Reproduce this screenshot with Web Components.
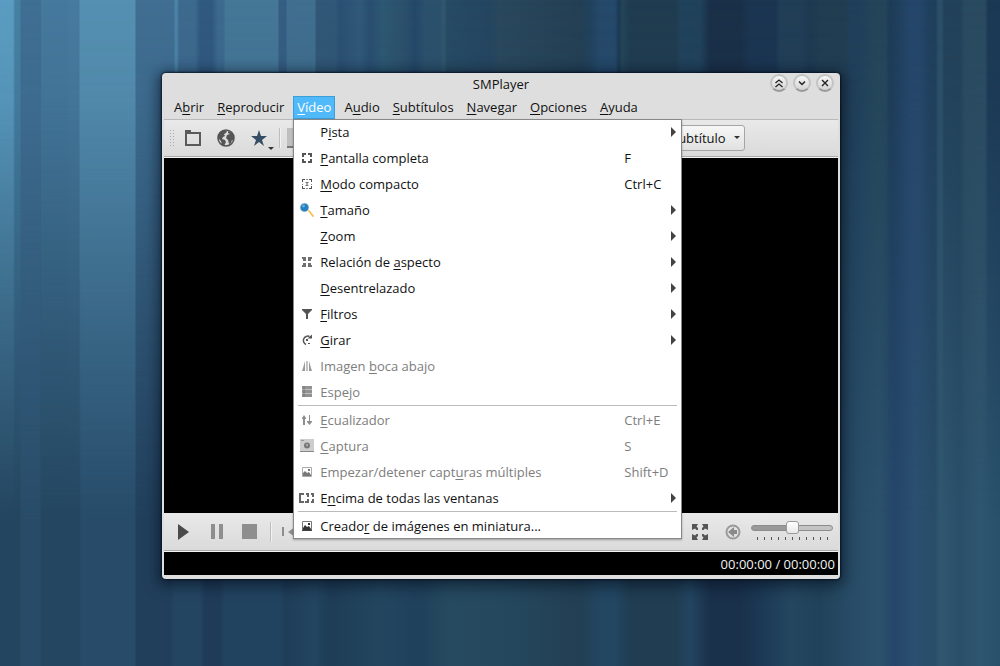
<!DOCTYPE html>
<html lang="es">
<head>
<meta charset="utf-8">
<title>SMPlayer</title>
<style>
  body { margin: 0; font: 13px/18px "Open Sans", "Noto Sans", sans-serif; color: #111; }
</style>
</head>
<body>
<sm-desktop>
  <sm-window></sm-window>
  <sm-pointer></sm-pointer>
</sm-desktop>

<script>
const define = (name, html, setup) => {
  const template = document.createElement('template');
  template.innerHTML = html;
  customElements.define(name, class extends HTMLElement {
    constructor() {
      super();
      this.attachShadow({ mode: 'open' }).append(template.content.cloneNode(true));
    }
    connectedCallback() { if (setup) setup(this, this.shadowRoot); }
  });
};

// Each entry: [size, SVG markup]
const icons = {
  folder: [18, '<path d="M1 1h6v2h10v14H1zM3 5v10h12V5z" fill="#5b5b5b" fill-rule="evenodd"/>'],
  globe: [18, '<circle cx="9" cy="9" r="8" fill="#dcdcdc" stroke="#555" stroke-width="1.6"/><path d="M2 4l4-3 4 1-1 2-2 1 1 2-2 1-1 2 3 1 1 2-2 4-2-1-1-4-3-3zM11 2l4 2 2 4v4l-2-1-1 3-2 1-1-4-2-2 1-3 3-1-2-1z" fill="#555"/>'],
  star: [18, '<path d="M9 1l2 6h6l-5 4 2 6-5-4-5 4 2-6-5-4h6z" fill="#364d66"/>'],
  cut: [20, '<path d="M0 0h20v18H0z" fill="#bfbfbf"/><path d="M0 18h20v2H0z" fill="#777"/>'],
  play: [18, '<path d="M4 1l11 8-11 8z" fill="#4a4a4a"/>'],
  pause: [18, '<path d="M4 1h4v15H4zM12 1h4v15h-4z" fill="#8e8e8e"/>'],
  stop: [18, '<path d="M2 1h15v15H2z" fill="#8e8e8e"/>'],
  prev: [18, '<path d="M1 4h2v9H1zM14 4v10L7 9z" fill="#8e8e8e"/>'],
  full: [18, '<path d="M1 1h6L5.500 3.500 7 5v2H5.500L4 5.500 1 7zM17 1h-6l1.500 2.500L11 5v2h1.500L14 5.500 17 7zM1 17h6l-1.500-2.500L7 13v-2H5.500L4 12.500 1 11zM17 17h-6l1.500-2.500L11 13v-2h1.500l1.500 1.500 3-1.500z" fill="#555"/>'],
  mute: [18, '<circle cx="9" cy="9" r="6.500" fill="none" stroke="#9a9a9a" stroke-width="2"/><path d="M4 9l6-5v3h3v4h-3v3z" fill="#8a8a8a"/>'],
  fit: [16, '<path d="M3 3h4v2H5v2H3zM9 3h4v4h-2V5H9zM3 9h2v2h2v2H3zM11 9h2v4H9v-2h2z" fill="#555"/>'],
  compact: [16, '<path d="M3 3h3v1H4v2H3zM10 3h3v3h-1V4h-2zM3 10h1v2h2v1H3zM12 10h1v3h-3v-1h2z" fill="#555"/><path d="M7 3h2v1H7zM7 12h2v1H7zM3 8h1v1H3zM12 8h1v1h-1z" fill="#888"/><path d="M6 6h4L8.500 7.500v1L10 10H6l1.500-1.500v-1z" fill="#777"/>'],
  lens: [16, '<path d="M10 9l4 5" stroke="#f4c35a" stroke-width="2" stroke-linecap="round"/><circle cx="5.500" cy="5.500" r="4.300" fill="#2580bd" stroke="#b9cdd8" stroke-width=".6"/><circle cx="4.500" cy="4" r="1.400" fill="#65b0df"/>'],
  aspect: [16, '<path d="M3 3h4v4H4V5H3zM13 3H9v4h3V5h1zM3 13h4V9H4v2H3zM13 13H9V9h3v2h1z" fill="#707070"/>'],
  funnel: [16, '<path d="M3 3h10v1L9 8v5H7V8L3 4z" fill="#555"/>'],
  rotate: [16, '<path d="M10.500 4.500A4.200 4.200 0 1 0 7 12.500" fill="none" stroke="#555" stroke-width="1.500"/><path d="M8.500 6.500H13V2.500z" fill="#555"/><path d="M7 7h2v2H7zM9 11h2v1H9z" fill="#555"/>'],
  flip: [16, '<path d="M6 3v10H3l1-3zM7 3h2v10H7zM10 3l2 7 1 3h-3z" fill="#999"/><path d="M7.500 3h1v11h-1z" fill="#eee"/>'],
  mirror: [16, '<path d="M3 2h10v11H3z" fill="#929292"/><path d="M3 5.500h10M3 9.500h10" stroke="#ccc" stroke-width=".8"/><path d="M5 2v11" stroke="#777"/>'],
  equal: [16, '<path d="M3 6l2-3 2 3H6v7H4V6zM10 3h1v7h2l-2.500 3L8 10h2z" fill="#8e8e8e"/><path d="M3 6.500h4M8 9.500h5" stroke="#8e8e8e"/>'],
  camera: [16, '<path d="M1 1h14v12H1z" fill="#cdcdcd"/><path d="M1 13h14v1H1z" fill="#888"/><circle cx="8" cy="7.500" r="3" fill="#777"/><circle cx="8" cy="7" r="1.200" fill="#a8a8a8"/><path d="M2 2h3v1H2z" fill="#999"/>'],
  photoDim: [16, '<path d="M3.500 3.500h9v9h-9z" fill="none" stroke="#aaa"/><path d="M4 12V9l2-2 2 2 2-1 2 3v1zM9 5h2v2H9z" fill="#777"/>'],
  ontop: [16, '<path d="M0 3h5v2H2v6h3v2H0zM7 3h3v4H8V5H7zM8 9h2v4H6v-2h2zM12 3h3v4h-2V5h-1zM13 9h2v4h-3v-2h1z" fill="#666"/>'],
  photo: [16, '<path d="M3.500 3.500h9v9h-9z" fill="none" stroke="#777"/><path d="M4 12V10l2-3 2 2 2-1 2 3v1zM9 5h2v2H9z" fill="#333"/><path d="M3 12h10v1H3z" fill="#444"/>'],
  shade: [10, '<path d="M1.500 5L5 2l3.500 3M1.500 9L5 6l3.500 3" fill="none" stroke="#222" stroke-width="1.300"/>'],
  down: [10, '<path d="M2 3.500l3 3 3-3" fill="none" stroke="#222" stroke-width="1.500"/>'],
  close: [10, '<path d="M2 2l6 6M8 2l-6 6" fill="none" stroke="#222" stroke-width="1.400"/>'],
  submenu: [10, '<path d="M2 0l5 5-5 5z" fill="#444"/>'],
  caret: [6, '<path d="M0 2h6L3 5z" fill="#333"/>']
};

define('sm-icon', `
  <style>:host{display:block;flex:none;line-height:0} svg{display:block}</style>`,
  (host, root) => {
    const entry = icons[host.getAttribute('name')];
    if (!entry) return;
    const [size, art] = entry;
    root.innerHTML += `<svg width="${size}" height="${size}" viewBox="0 0 ${size} ${size}" aria-hidden="true">${art}</svg>`;
  });

define('sm-desktop', `
  <style>
    :host{
      display:flex;flex-direction:column;box-sizing:border-box;min-height:100vh;
      padding:73px 16% 87px 162px;position:relative;isolation:isolate;
      background:
        linear-gradient(90deg,
          #5b9dc2 0 1.3%,#4681a4 1.5% 2%,#406f94 2.1% 4.1%,#45799d 4.1% 6.8%,#477b9f 6.9% 7.900%,
          #5590b2 8% 13.500%,#406f93 13.600% 17.400%,#4c83a8 17.500% 17.700%,#3d6a8e 17.900% 19.500%,
          #315a81 20% 21.200%,#3d6a8f 21.800% 22.400%,#457797 22.500% 27.800%,#365e83 27.900% 28.600%,
          #416f90 28.700% 31.500%,#315877 31.600% 33.500%,#2b5073 34%,#30597a 36%,#294e70 37%,
          #2e5874 38.200%,#2b506b 40.500%,#24486a 41.500%,#2b516c 42.500% 44%,#32586e 44.400%,#264b64 44.700%,
          #254560 49%,#29485d 50%,#243f54 58%,#21425d 59%,#25496a 60% 61.500%,#1c3850 61.900%,
          #24455a 62.200%,#203c50 63% 67.600%,#21425b 68% 70%,#1a3048 71% 74%,#1b3551 75% 77.500%,
          #213e57 78% 80%,#1d3951 81%,#213d51 82% 84.500%,#203f5a 85% 86%,#244559 87.500% 88.500%,
          #1d3b56 89%,#25466a 91% 92%,#203f5c 93% 93.600%,#2c4e67 93.800% 94.200%,#22415a 94.400% 96%,
          #2a4a60 96.500% 98.500%,#1b3854 98.800% 100%);
    }
    :host::before{
      content:"";position:absolute;inset:0;z-index:-1;
      background:linear-gradient(90deg,
        #24455f 0 2%,#284c68 2.100% 4%,#244660 4.100% 8%,#274b69 8.100% 13.500%,#213f5b 13.600% 17%,
        #244562 17.500% 20%,#1f3b58 20.500% 22%,#22435f 22.500% 28%,#1f3d58 28.500%,#23455f 31.500%,
        #1e3c56 33%,#23465f 38%,#20405b 42%,#264a60 45%,#25485e 50%,#223f53 58%,#234661 60% 61.500%,
        #203d52 63% 67.500%,#234560 69%,#1a314b 71% 74%,#1c3854 76%,#24465f 79%,#21425a 82%,
        #284c66 85%,#2b516c 88%,#24466a 89.500%,#2b5070 91.500%,#284d68 93.500%,#305770 94%,#2a4f69 96%,
        #2f566f 98%,#28506a 100%);
      -webkit-mask:linear-gradient(transparent 0,rgba(0,0,0,.1) 15%,rgba(0,0,0,.55) 45%,#000 78%);
      mask:linear-gradient(transparent 0,rgba(0,0,0,.1) 15%,rgba(0,0,0,.55) 45%,#000 78%);
    }
  </style><slot></slot>`);

define('sm-pointer', `
  <style>:host{display:block;position:absolute;left:498px;top:371px;pointer-events:none;filter:drop-shadow(0 1px 1px rgba(0,0,0,.5))}</style>
  <svg width="14" height="22" viewBox="0 0 14 22" aria-hidden="true"><path d="M1 1l10 11-3 1-1 4-2-1-4 2z" fill="#222"/><path d="M1 18l4-3 2 3 1-4 3-2" fill="none" stroke="#eee" stroke-width="1.200"/></svg>`);

define('sm-titlebar', `
  <style>
    :host{display:grid;grid-template-columns:1fr auto 1fr;align-items:start;height:23px}
    h1{grid-column:2;margin:0;padding-top:2px;font:inherit}
    div{display:flex;gap:5px;justify-content:flex-end;padding:1px 4px 0 0}
    button{display:grid;place-items:center;box-sizing:border-box;width:18px;height:18px;padding:0;border:2px solid #c4c4c4;border-radius:50%;
      border-bottom-color:#999;background:linear-gradient(#f6f6f6,#d4d4d4)}
  </style>
  <h1>SMPlayer</h1>
  <div>
    <button aria-label="Maximizar"><sm-icon name="shade"></sm-icon></button>
    <button aria-label="Minimizar"><sm-icon name="down"></sm-icon></button>
    <button aria-label="Cerrar"><sm-icon name="close"></sm-icon></button>
  </div>`);

define('sm-menu', `
  <style>
    :host{display:block}
    button{display:block;box-sizing:border-box;height:23px;padding:0 4px 1px;border:0;background:none;font:inherit;color:inherit;white-space:nowrap}
    :host([open]) button{background:#4fb9f9;color:#fff;box-shadow:inset 0 0 0 1px #3d9fd8}
  </style>
  <button><slot></slot></button><slot name="panel"></slot>`);

define('sm-menu-item', `
  <style>
    :host{display:block}
    button{display:grid;grid-template-columns:16px 1fr 45px 10px;align-items:center;width:100%;height:26px;
      padding:0 3px 0 6px;border:0;background:none;font:inherit;color:inherit;text-align:left;white-space:nowrap}
    .label{padding-left:5px}
    button:disabled{color:#7d7d7d}
  </style>
  <button role="menuitem"><sm-icon></sm-icon><span class="label"><slot></slot></span><span class="key"></span><span class="more"></span></button>`,
  (host, root) => {
    const icon = document.createElement('sm-icon');
    icon.setAttribute('name', host.getAttribute('icon') || '');
    root.querySelector('sm-icon').replaceWith(icon);
    root.querySelector('button').disabled = host.hasAttribute('disabled');
    root.querySelector('.key').textContent = host.getAttribute('key') || '';
    if (host.hasAttribute('submenu')) root.querySelector('.more').innerHTML = '<sm-icon name="submenu"></sm-icon>';
  });

define('sm-menu-panel', `
  <style>
    :host{display:block;position:absolute;z-index:2;top:100%;left:0;width:389px;background:#fff;color:#111;box-shadow:0 1px 2px rgba(0,0,0,.3)}
    :host::after{content:"";position:absolute;inset:0;border:1px solid #888;pointer-events:none}
    hr{margin:0 5px;border:0;height:2px;background:linear-gradient(#bbb 1px,#fff 1px)}
    u{text-decoration:underline 1px;text-underline-offset:2px}
  </style>
  <div role="menu">
    <sm-menu-item submenu>P<u>i</u>sta</sm-menu-item>
    <sm-menu-item icon="fit" key="F"><u>P</u>antalla completa</sm-menu-item>
    <sm-menu-item icon="compact" key="Ctrl+C"><u>M</u>odo compacto</sm-menu-item>
    <sm-menu-item icon="lens" submenu><u>T</u>amaño</sm-menu-item>
    <sm-menu-item submenu><u>Z</u>oom</sm-menu-item>
    <sm-menu-item icon="aspect" submenu>Relación de <u>a</u>specto</sm-menu-item>
    <sm-menu-item submenu><u>D</u>esentrelazado</sm-menu-item>
    <sm-menu-item icon="funnel" submenu><u>F</u>iltros</sm-menu-item>
    <sm-menu-item icon="rotate" submenu><u>G</u>irar</sm-menu-item>
    <sm-menu-item icon="flip" disabled>Imagen <u>b</u>oca abajo</sm-menu-item>
    <sm-menu-item icon="mirror" disabled>Espe<u>j</u>o</sm-menu-item>
    <hr>
    <sm-menu-item icon="equal" key="Ctrl+E" disabled><u>E</u>cualizador</sm-menu-item>
    <sm-menu-item icon="camera" key="S" disabled><u>C</u>aptura</sm-menu-item>
    <sm-menu-item icon="photoDim" key="Shift+D" disabled>Empezar/detener capt<u>u</u>ras múltiples</sm-menu-item>
    <sm-menu-item icon="ontop" submenu>E<u>n</u>cima de todas las ventanas</sm-menu-item>
    <hr>
    <sm-menu-item icon="photo">Creado<u>r</u> de imágenes en miniatura...</sm-menu-item>
  </div>`);

define('sm-menubar', `
  <style>
    :host{display:block;border-bottom:1px solid #b9b9b9}
    nav{display:flex;gap:5px;padding-left:6px;height:23px}
    sm-menu[open]{position:relative}
    u{text-decoration:underline 1px;text-underline-offset:2px}
  </style>
  <nav>
    <sm-menu>A<u>b</u>rir</sm-menu>
    <sm-menu><u>R</u>eproducir</sm-menu>
    <sm-menu open><u>V</u>ídeo<sm-menu-panel slot="panel"></sm-menu-panel></sm-menu>
    <sm-menu>A<u>u</u>dio</sm-menu>
    <sm-menu><u>S</u>ubtítulos</sm-menu>
    <sm-menu><u>N</u>avegar</sm-menu>
    <sm-menu><u>O</u>pciones</sm-menu>
    <sm-menu><u>A</u>yuda</sm-menu>
  </nav>`);

define('sm-toolbar', `
  <style>
    :host{display:flex;align-items:center;height:36px;padding-left:5px;background:linear-gradient(#e9e9e9,#dadada);border-bottom:1px solid #aaa;box-shadow:0 1px #f4f4f4;margin-bottom:1px}
    .grip{width:5px;height:18px;background:radial-gradient(circle,#aaa 0 1px,transparent 1px) 0 0/3px 3px}
    button{display:block;padding:0;border:0;background:none}
    .tools{display:flex;align-items:center;gap:15px;padding-left:10px}
    .star{display:flex;align-items:flex-end}
    .star sm-icon+sm-icon{transform:translateY(4px)}
    .rule{width:1px;height:20px;background:#bdbdbd;box-shadow:1px 0 #f2f2f2;margin:0 7px 0 5px}
    .pick{position:relative;margin-left:auto;margin-right:93px}
    select{appearance:none;display:block;height:26px;width:106px;padding:0 18px 0 31px;border:1px solid #a5a5a5;border-radius:3px;
      background:linear-gradient(#f7f7f7,#e1e1e1);font:inherit;color:inherit}
    .pick sm-icon{position:absolute;right:5px;top:9px;pointer-events:none}
  </style>
  <span class="grip"></span>
  <span class="tools">
    <button aria-label="Abrir archivo"><sm-icon name="folder"></sm-icon></button>
    <button aria-label="Abrir URL"><sm-icon name="globe"></sm-icon></button>
    <button aria-label="Favoritos" class="star"><sm-icon name="star"></sm-icon><sm-icon name="caret"></sm-icon></button>
  </span>
  <span class="rule"></span>
  <button aria-label="Captura"><sm-icon name="cut"></sm-icon></button>
  <span class="pick"><select aria-label="Subtítulo"><option>Subtítulo</option></select><sm-icon name="caret"></sm-icon></span>`);

define('sm-controls', `
  <style>
    :host{display:flex;align-items:center;height:37px;padding:0 5px 0 10px;background:linear-gradient(#e9e9e9,#dadada);border-bottom:1px solid #aaa;box-shadow:0 1px #f4f4f4;margin-bottom:1px}
    button{display:block;padding:0;border:0;background:none}
    .group{display:flex;gap:15px}
    .rule{width:1px;height:20px;background:#bdbdbd;box-shadow:1px 0 #f2f2f2;margin:0 10px 0 12px}
    .right{margin-left:auto;align-items:center}
    .volume{width:82px;height:22px;margin-left:-6px}
    input{appearance:none;display:block;width:100%;height:14px;margin:0;background:none}
    input::-webkit-slider-runnable-track{height:6px;border:1px solid #8c8c8c;border-radius:3px;box-sizing:border-box;background:linear-gradient(90deg,#999 50%,#c4c4c4 50%)}
    input::-webkit-slider-thumb{appearance:none;box-sizing:border-box;width:13px;height:13px;margin-top:-5px;border:1px solid #999;border-radius:3px;background:linear-gradient(#fff,#e8e8e8)}
    .ticks{display:block;height:3px;margin:2px 5px 0 6px;background:repeating-linear-gradient(90deg,#555 0 1px,transparent 1px 7px)}
  </style>
  <span class="group">
    <button aria-label="Reproducir"><sm-icon name="play"></sm-icon></button>
    <button aria-label="Pausa" disabled><sm-icon name="pause"></sm-icon></button>
    <button aria-label="Detener" disabled><sm-icon name="stop"></sm-icon></button>
  </span>
  <span class="rule"></span>
  <button aria-label="Anterior" disabled><sm-icon name="prev"></sm-icon></button>
  <span class="group right">
    <button aria-label="Pantalla completa"><sm-icon name="full"></sm-icon></button>
    <button aria-label="Silenciar"><sm-icon name="mute"></sm-icon></button>
    <span class="volume"><input type="range" min="0" max="100" value="50" aria-label="Volumen"><span class="ticks"></span></span>
  </span>`);

define('sm-window', `
  <style>
    :host{display:flex;flex-direction:column;flex:1;box-sizing:border-box;padding:0 2px 4px;background:#dedede;border-radius:4px;
      box-shadow:0 0 2px 1px rgba(5,15,30,.8),0 3px 14px 4px rgba(5,15,30,.6)}
    .video{flex:1;min-height:355px;background:#000}
    .status{height:23px;padding-right:3px;background:#000;color:#f2f2f2;text-align:right;line-height:25px}
  </style>
  <sm-titlebar></sm-titlebar>
  <sm-menubar></sm-menubar>
  <sm-toolbar></sm-toolbar>
  <div class="video" role="img" aria-label="Vídeo"></div>
  <sm-controls></sm-controls>
  <div class="status">00:00:00 / 00:00:00</div>`);
</script>
</body>
</html>
